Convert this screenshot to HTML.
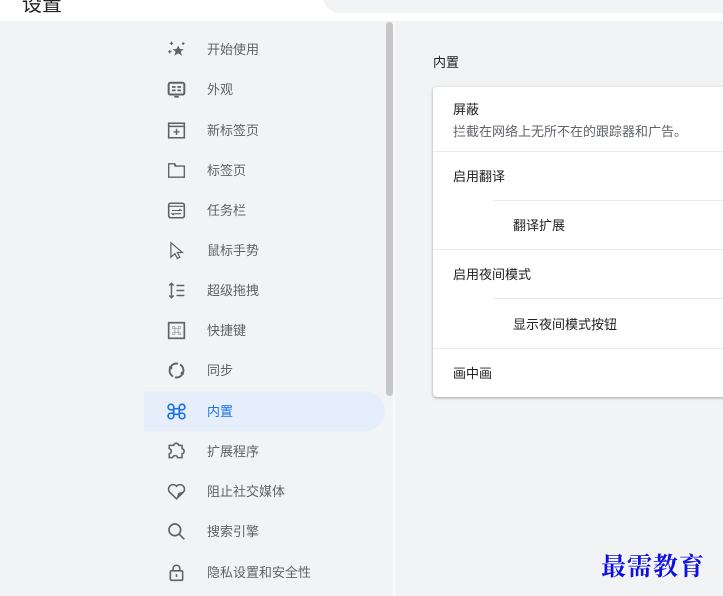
<!DOCTYPE html>
<html><head><meta charset="utf-8"><style>
*{margin:0;padding:0;box-sizing:border-box}
body{width:723px;height:596px;overflow:hidden;background:#f1f3f4;font-family:"Liberation Sans","Noto Sans CJK SC",sans-serif;position:relative}
.top{position:absolute;left:0;top:0;width:723px;height:21px;background:#fff}
.title{position:absolute;left:22px;top:-12px;font-size:20px;color:#202124}
.search{position:absolute;left:323px;top:-20px;width:420px;height:33px;border-radius:17px;background:#f1f3f4}
.sb{position:absolute;left:386px;top:22px;width:7px;height:374px;border-radius:4px;background:#c6c6c6}
.item{position:absolute;left:144px;width:241px;height:40px;font-size:13px;color:#5f6368;line-height:42px}
.item .t{position:absolute;left:63px}
.item svg{position:absolute;left:23px;top:11px;width:19px;height:19px}
.act{background:#e6eefc;border-radius:0 20px 20px 0;color:#1a73e8}
.sec{position:absolute;left:433px;top:52px;font-size:13px;color:#202124}
.card{position:absolute;left:433px;top:87px;width:300px;height:310px;background:#fff;border-radius:4px;box-shadow:0 1px 3px rgba(60,64,67,.3),0 1px 2px rgba(60,64,67,.15)}
.r{position:absolute;font-size:13px;color:#202124}
.d{position:absolute;height:1px;background:#e8eaed;right:0}
.wm{position:absolute;left:601px;top:547px;font-family:"Noto Serif CJK SC",serif;font-size:25px;font-weight:bold;color:#1010e0;letter-spacing:1px;text-shadow:0 0 3px #fff,0 0 3px #fff}
</style></head><body>
<div class="top"><div class="title">设置</div><div class="search"></div></div>
<div class="sb"></div>
<div style="position:absolute;left:393px;top:22px;width:2px;height:574px;background:#fafafa"></div>

<div class="item" style="top:29px"><svg viewBox="0 0 17 17"><path d="M10 5l1.6 3.2h3.4l-2.7 2.2 1.1 3.6L10 12 6.6 14l1.1-3.6L5 8.2h3.4z" fill="#5f6368"/><path d="M4 1.5v3M2.5 3h3M14.5 2v2.5M13.3 3.2h2.4M2.5 9v3M1 10.5h3" stroke="#5f6368" stroke-width="1"/></svg><span class="t">开始使用</span></div>
<div class="item" style="top:69px"><svg viewBox="0 0 17 17"><rect x="1.5" y="2.5" width="14" height="10.5" rx="1.5" fill="none" stroke="#5f6368" stroke-width="1.8"/><path d="M4.5 6.3h3.2M9.3 6.3h3.2M4.5 9.3h3.2M9.3 9.3h3.2M6.5 15h4" stroke="#5f6368" stroke-width="1.6"/></svg><span class="t">外观</span></div>
<div class="item" style="top:110px"><svg viewBox="0 0 17 17"><rect x="1.5" y="2" width="14" height="13" fill="none" stroke="#5f6368" stroke-width="1.4"/><path d="M1.5 4.8h14M8.5 7v5.5M5.8 9.8h5.4" stroke="#5f6368" stroke-width="1.3"/></svg><span class="t">新标签页</span></div>
<div class="item" style="top:150px"><svg viewBox="0 0 17 17"><path d="M1.5 2.5h5.5l1 2h7.5v10H1.5z" fill="none" stroke="#5f6368" stroke-width="1.2"/><path d="M7 2.5v2h1" fill="none" stroke="#5f6368" stroke-width="1.1"/></svg><span class="t">标签页</span></div>
<div class="item" style="top:190px"><svg viewBox="0 0 17 17"><rect x="1.5" y="2" width="14" height="13" rx="1.8" fill="none" stroke="#5f6368" stroke-width="1.4"/><path d="M1.5 4.8h14M4.5 8.5h8l-1.5-1.3M12.5 11.3h-8l1.5 1.3" fill="none" stroke="#5f6368" stroke-width="1"/></svg><span class="t">任务栏</span></div>
<div class="item" style="top:230px"><svg viewBox="0 0 17 17"><path d="M3.5 1.5v13l3.5-3.2 2.3 4.4 2.2-1.2-2.3-4.2h4.6z" fill="none" stroke="#5f6368" stroke-width="1.1"/></svg><span class="t">鼠标手势</span></div>
<div class="item" style="top:270px"><svg viewBox="0 0 17 17"><path d="M4 2v13M2 4l2-2 2 2M2 13l2 2 2-2M8.5 4h7M8.5 8.5h7M8.5 13h7" fill="none" stroke="#5f6368" stroke-width="1.3"/></svg><span class="t">超级拖拽</span></div>
<div class="item" style="top:310px"><svg viewBox="0 0 17 17"><rect x="1.5" y="1.5" width="14" height="14" fill="none" stroke="#5f6368" stroke-width="1.5"/><text x="8.5" y="12" font-size="9" text-anchor="middle" fill="#5f6368">⌘</text></svg><span class="t">快捷键</span></div>
<div class="item" style="top:350px"><svg viewBox="0 0 17 17"><path d="M3 5.5A6.2 6.2 0 0 1 14 11.5M14 11.5A6.2 6.2 0 0 1 3 5.5" fill="none" stroke="#5f6368" stroke-width="1.7" stroke-dasharray="8 2"/><circle cx="3.3" cy="6" r="1.5" fill="#5f6368"/><circle cx="13.7" cy="11" r="1.5" fill="#5f6368"/></svg><span class="t">同步</span></div>
<div class="item act" style="top:391px"><svg viewBox="0 0 17 17"><path d="M6 6V4.5A2.5 2.5 0 1 0 3.5 7H6zM11 6V4.5A2.5 2.5 0 1 1 13.5 7H11zM6 11v1.5A2.5 2.5 0 1 1 3.5 10H6zM11 11v1.5a2.5 2.5 0 1 0 2.5-2.5H11zM6 6h5v5H6z" fill="none" stroke="#1a73e8" stroke-width="1.5"/></svg><span class="t">内置</span></div>
<div class="item" style="top:431px"><svg viewBox="0 0 17 17"><path d="M6 3a2.3 2.3 0 0 1 4.5 0h3v3a2.3 2.3 0 0 1 0 4.5V14H9.5a2.3 2.3 0 0 0-4.5 0H2v-3.5a2.3 2.3 0 0 0 0-4.5V3z" fill="none" stroke="#5f6368" stroke-width="1.4"/></svg><span class="t">扩展程序</span></div>
<div class="item" style="top:471px"><svg viewBox="0 0 17 17"><path d="M8.5 15L2.3 9A3.4 3.4 0 0 1 8.5 3.8a3.4 3.4 0 0 1 6.2 5.2z" fill="none" stroke="#5f6368" stroke-width="1.4"/><path d="M8.5 15l3.5-3.5 2-3-4 1.5z" fill="#5f6368"/></svg><span class="t">阻止社交媒体</span></div>
<div class="item" style="top:511px"><svg viewBox="0 0 17 17"><circle cx="7" cy="7" r="5.2" fill="none" stroke="#5f6368" stroke-width="1.5"/><path d="M10.7 10.7L15.5 15.5" stroke="#5f6368" stroke-width="1.5"/></svg><span class="t">搜索引擎</span></div>
<div class="item" style="top:552px"><svg viewBox="0 0 17 17"><rect x="3" y="7" width="11" height="8.5" rx="1" fill="none" stroke="#5f6368" stroke-width="1.4"/><path d="M5.5 7V5a3 3 0 0 1 6 0v2M8.5 10v2.5" fill="none" stroke="#5f6368" stroke-width="1.4"/></svg><span class="t">隐私设置和安全性</span></div>

<div class="sec">内置</div>
<div class="card">
<div class="r" style="left:20px;top:12px">屏蔽</div>
<div class="r" style="left:20px;top:34px;color:#5f6368">拦截在网络上无所不在的跟踪器和广告。</div>
<div class="d" style="left:0;top:64px"></div>
<div class="r" style="left:20px;top:79px">启用翻译</div>
<div class="d" style="left:60px;top:113px"></div>
<div class="r" style="left:80px;top:128px">翻译扩展</div>
<div class="d" style="left:0;top:162px"></div>
<div class="r" style="left:20px;top:177px">启用夜间模式</div>
<div class="d" style="left:60px;top:211px"></div>
<div class="r" style="left:80px;top:227px">显示夜间模式按钮</div>
<div class="d" style="left:0;top:261px"></div>
<div class="r" style="left:20px;top:276px">画中画</div>
</div>
<div class="wm">最需教育</div>
</body></html>
